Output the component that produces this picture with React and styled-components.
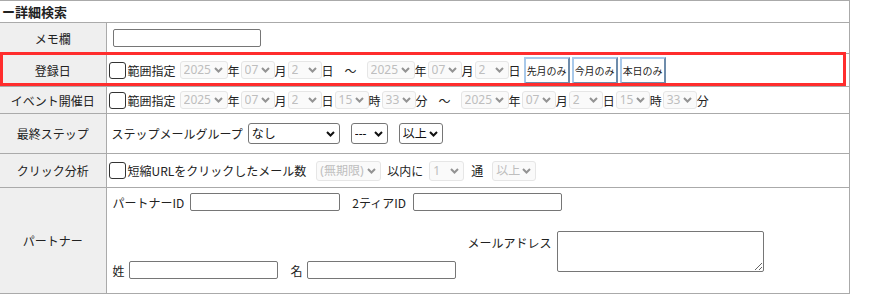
import React from 'react'
import styled, { createGlobalStyle } from 'styled-components'

const GlobalStyle = createGlobalStyle`
  body {
    margin: 0;
    background: #fff;
    font-family: "Noto Sans CJK JP", "Noto Sans", sans-serif;
    font-size: 12px;
    color: #333;
  }
`

const chevron = color =>
  `url("data:image/svg+xml;utf8,<svg xmlns='http://www.w3.org/2000/svg' width='9' height='6' viewBox='0 0 9 6'><path d='M1 1 L4.5 4.5 L8 1' fill='none' stroke='${encodeURIComponent(color)}' stroke-width='2'/></svg>")`

const Wrapper = styled.div`
  position: relative;
  width: 850px;
`

const Table = styled.table`
  width: 850px;
  border-collapse: collapse;
  table-layout: fixed;
`

const LabelCol = styled.col`
  width: 106px;
`

const HeadCell = styled.td`
  height: 21px;
  padding: 0 0 0 2px;
  border-top: 1px solid #aaa;
  border-right: 1px solid #aaa;
  border-bottom: 1px solid #aaa;
  font-size: 13px;
  font-weight: bold;
  color: #222;
  line-height: 1;
`

const Row = styled.tr`
  height: ${p => p.h}px;
`

const Label = styled.th`
  padding: 0;
  background: #efefef;
  border-right: 1px solid #aaa;
  border-bottom: 1px solid #aaa;
  font-weight: normal;
  font-size: 12px;
  color: #222;
  text-align: center;
  vertical-align: middle;
`

const Cell = styled.td`
  padding: ${p => (p.top ? '5px 5px 13px 5px' : '0 5px')};
  border-right: 1px solid #aaa;
  border-bottom: 1px solid #aaa;
  vertical-align: ${p => (p.top ? 'top' : 'middle')};
`

const Line = styled.div`
  display: flex;
  align-items: center;
  white-space: nowrap;
  & > * {
    flex-shrink: 0;
  }
`

const Text = styled.span`
  margin: ${p => p.m || '0'};
  color: #222;
`

const Check = styled.input.attrs({ type: 'checkbox' })`
  appearance: none;
  box-sizing: border-box;
  width: 17px;
  height: 17px;
  margin: 0 2px 0 -3px;
  border: 1px solid #333;
  border-radius: 3px;
  background: #fff;
`

const TextInput = styled.input.attrs({ type: 'text' })`
  box-sizing: border-box;
  flex-shrink: 0;
  width: ${p => p.w}px;
  height: 18px;
  margin: ${p => p.m || '0'};
  border: 1px solid #767676;
  border-radius: 2px;
  padding: 0 3px;
`

const Select = styled.select`
  appearance: none;
  box-sizing: border-box;
  width: ${p => p.w}px;
  height: ${p => p.h || 18}px;
  margin: ${p => p.m || '0'};
  padding: 0 0 0 3px;
  font-family: "Noto Sans", "Noto Sans CJK JP", sans-serif;
  font-size: 12px;
  line-height: 1;
  color: #111;
  border: 1px solid #767676;
  border-radius: 3px;
  background: #fff ${chevron('#111')} no-repeat right 4px center;

  &:disabled {
    color: #a3a3a3;
    border-color: #dcdcdc;
    background: #f8f8f8 ${chevron('#666')} no-repeat right 4px center;
  }
`

const QuickButton = styled.button`
  box-sizing: border-box;
  width: 46px;
  height: 27px;
  margin-left: 2px;
  padding: 0;
  background: #fff;
  border-style: solid;
  border-width: 2px;
  border-color: #a9c9ea #6e8cab #6e8cab #a9c9ea;
  font-family: "Noto Sans CJK JP", sans-serif;
  font-size: 10px;
  color: #222;
`

const Memo = styled.textarea`
  box-sizing: border-box;
  width: 207px;
  height: 41px;
  border: 1px solid #767676;
  border-radius: 2px;
`

const PartnerLine = styled.div`
  display: flex;
  align-items: flex-start;
  margin-top: 20px;
  white-space: nowrap;
`

const Group = styled.div`
  display: flex;
  align-items: ${p => (p.start ? 'flex-start' : 'center')};
  margin: ${p => p.m || '0'};
`

const Highlight = styled.div`
  position: absolute;
  left: 0;
  top: 52px;
  width: 840px;
  height: 28px;
  border: 3px solid #ff2d2d;
  pointer-events: none;
`

const DatePart = ({ value, unit, w = 34 }) => (
  <>
    <Select w={w} disabled defaultValue={value}>
      <option>{value}</option>
    </Select>
    <Text m="0 1px 0 0">{unit}</Text>
  </>
)

const DateRange = ({ withTime }) => (
  <>
    <DatePart value="2025" unit="年" w={48} />
    <DatePart value="07" unit="月" />
    <DatePart value="2" unit="日" />
    {withTime && <DatePart value="15" unit="時" />}
    {withTime && <DatePart value="33" unit="分" />}
  </>
)

export default function App() {
  return (
    <Wrapper>
      <GlobalStyle />
      <Table>
        <colgroup>
          <LabelCol />
          <col />
        </colgroup>
        <tbody>
          <tr>
            <HeadCell colSpan={2}>ー詳細検索</HeadCell>
          </tr>
          <Row h={31}>
            <Label>メモ欄</Label>
            <Cell>
              <TextInput w={148} m="0 0 0 1px" />
            </Cell>
          </Row>
          <Row h={33}>
            <Label>登録日</Label>
            <Cell>
              <Line>
                <Check />
                <Text m="0 4px 0 0">範囲指定</Text>
                <DateRange />
                <Text m="0 10px">～</Text>
                <DateRange />
                <QuickButton>先月のみ</QuickButton>
                <QuickButton>今月のみ</QuickButton>
                <QuickButton>本日のみ</QuickButton>
              </Line>
            </Cell>
          </Row>
          <Row h={27}>
            <Label>イベント開催日</Label>
            <Cell>
              <Line>
                <Check />
                <Text m="0 4px 0 0">範囲指定</Text>
                <DateRange withTime />
                <Text m="0 10px">～</Text>
                <DateRange withTime />
              </Line>
            </Cell>
          </Row>
          <Row h={40}>
            <Label>最終ステップ</Label>
            <Cell>
              <Line>
                <Text m="0 5px 0 0">ステップメールグループ</Text>
                <Select w={92} h={21} defaultValue="なし">
                  <option>なし</option>
                </Select>
                <Select w={37} h={21} m="0 0 0 11px" defaultValue="---">
                  <option>---</option>
                </Select>
                <Select w={44} h={21} m="0 0 0 11px" defaultValue="以上">
                  <option>以上</option>
                </Select>
              </Line>
            </Cell>
          </Row>
          <Row h={34}>
            <Label>クリック分析</Label>
            <Cell>
              <Line>
                <Check />
                <Text>短縮URLをクリックしたメール数</Text>
                <Select w={65} h={20} m="0 0 0 10px" disabled defaultValue="(無期限)">
                  <option>(無期限)</option>
                </Select>
                <Text m="0 6px">以内に</Text>
                <Select w={35} h={20} disabled defaultValue="1">
                  <option>1</option>
                </Select>
                <Text m="0 9px 0 7px">通</Text>
                <Select w={44} h={20} disabled defaultValue="以上">
                  <option>以上</option>
                </Select>
              </Line>
            </Cell>
          </Row>
          <Row h={106}>
            <Label>パートナー</Label>
            <Cell top>
              <Line>
                <Text m="0 6px 0 1px">パートナーID</Text>
                <TextInput w={150} />
                <Text m="0 5px 0 12px">2ティアID</Text>
                <TextInput w={149} m="0 0 0 2px" />
              </Line>
              <PartnerLine>
                <Group m="30px 0 0 0">
                  <Text m="0 4px 0 1px">姓</Text>
                  <TextInput w={149} />
                  <Text m="0 4px 0 13px">名</Text>
                  <TextInput w={149} />
                </Group>
                <Group start m="0 0 0 12px">
                  <Text m="3px 5px 0 0">メールアドレス</Text>
                  <Memo />
                </Group>
              </PartnerLine>
            </Cell>
          </Row>
        </tbody>
      </Table>
      <Highlight />
    </Wrapper>
  )
}
